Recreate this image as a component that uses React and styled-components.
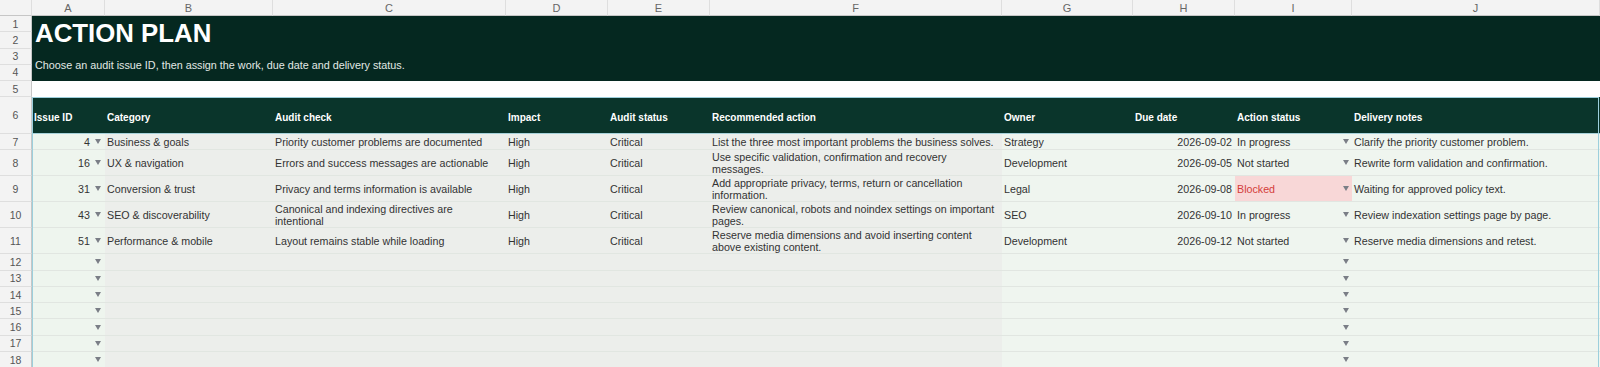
import React from "react"
import styled, { createGlobalStyle } from "styled-components"

const COLS = "32px 73px 168px 233px 102px 102px 292px 131px 102px 117px 248px"

const GlobalStyle = createGlobalStyle`
  html, body {
    margin: 0;
    padding: 0;
    background: #ffffff;
    overflow: hidden;
  }
  body {
    font-family: "Liberation Sans", Arial, sans-serif;
    font-size: 10.7px;
    color: #333;
  }
`

const Sheet = styled.div`
  width: 1600px;
  height: 367px;
  overflow: hidden;
`

const Row = styled.div`
  display: grid;
  grid-template-columns: ${COLS};
  height: ${(p) => p.$h}px;
`

const ColLetter = styled.div`
  background: #f3f3f3;
  border-right: 1px solid #dedede;
  border-bottom: 1px solid #c6c6c6;
  color: #666;
  font-size: 11px;
  display: flex;
  align-items: center;
  justify-content: center;
  box-sizing: border-box;
`

const RowNum = styled.div`
  background: #f3f3f3;
  border-right: 1px solid #c6c6c6;
  border-bottom: 1px solid #dedede;
  color: #555;
  font-size: 10.5px;
  display: flex;
  align-items: center;
  justify-content: center;
  box-sizing: border-box;
  height: ${(p) => (p.$h ? `${p.$h}px` : "auto")};
`

/* rows 1-4: merged banner */
const TitleBlock = styled.div`
  display: grid;
  grid-template-columns: 32px 1fr;
`

const Gutter = styled.div`
  display: flex;
  flex-direction: column;
`

const Banner = styled.div`
  background: #052820;
  display: grid;
  grid-template-rows: 1fr 1fr;
  padding-left: 3px;
`

const Title = styled.h1`
  margin: 0;
  padding-top: 3px;
  color: #ffffff;
  font-size: 25.8px;
  font-weight: 700;
  display: flex;
  align-items: center;
`

const Subtitle = styled.p`
  margin: 0;
  color: #e2e9e5;
  font-size: 10.8px;
  display: flex;
  align-items: center;
`

const Spacer = styled.div`
  grid-column: 2 / -1;
  background: #ffffff;
`

const Frame = styled.div`
  position: relative;

  &::after {
    content: "";
    position: absolute;
    left: 32px;
    top: 0;
    right: 1px;
    bottom: 0;
    border: 1px solid #9ccfdc;
    border-bottom: none;
    pointer-events: none;
  }
`

const tones = {
  head: "#0a352b",
  id: "#eef5ee",
  grey: "#eceeeb",
  green: "#eff5ef",
  blocked: "#f8d7d7",
}

const Cell = styled.div`
  background: ${(p) => tones[p.$tone]};
  color: ${(p) => (p.$tone === "head" ? "#ffffff" : p.$tone === "blocked" ? "#d43d3a" : "#333")};
  font-weight: ${(p) => (p.$tone === "head" ? 700 : 400)};
  font-size: ${(p) => (p.$tone === "head" ? "10px" : "10.7px")};
  border-bottom: 1px solid ${(p) => (p.$tone === "head" ? "#a7d2da" : "#e1e6e1")};
  box-sizing: border-box;
  padding: ${(p) => (p.$tone === "head" ? "5px 3px 0 2px" : "0 3px 0 2px")};
  display: flex;
  align-items: center;
  justify-content: ${(p) => (p.$right ? "flex-end" : "flex-start")};
  line-height: 12px;
  min-width: 0;
  overflow: hidden;
`

const IdCell = styled(Cell)`
  justify-content: flex-end;
  gap: 5px;
  padding-right: 4px;
`

const StatusCell = styled(Cell)`
  padding-right: 3px;
`

const Caret = styled.span`
  width: 0;
  height: 0;
  margin-left: ${(p) => (p.$push ? "auto" : "0")};
  border-left: 3px solid transparent;
  border-right: 3px solid transparent;
  border-top: 5px solid #7a7e86;
  flex: none;
`

const letters = ["A", "B", "C", "D", "E", "F", "G", "H", "I", "J"]

const headers = [
  "Issue ID",
  "Category",
  "Audit check",
  "Impact",
  "Audit status",
  "Recommended action",
  "Owner",
  "Due date",
  "Action status",
  "Delivery notes",
]

const items = [
  {
    id: 4,
    category: "Business & goals",
    check: "Priority customer problems are documented",
    action: "List the three most important problems the business solves.",
    owner: "Strategy",
    due: "2026-09-02",
    status: "In progress",
    notes: "Clarify the priority customer problem.",
    h: 16.3,
  },
  {
    id: 16,
    category: "UX & navigation",
    check: "Errors and success messages are actionable",
    action: "Use specific validation, confirmation and recovery messages.",
    owner: "Development",
    due: "2026-09-05",
    status: "Not started",
    notes: "Rewrite form validation and confirmation.",
    h: 26,
  },
  {
    id: 31,
    category: "Conversion & trust",
    check: "Privacy and terms information is available",
    action: "Add appropriate privacy, terms, return or cancellation information.",
    owner: "Legal",
    due: "2026-09-08",
    status: "Blocked",
    notes: "Waiting for approved policy text.",
    h: 26,
  },
  {
    id: 43,
    category: "SEO & discoverability",
    check: "Canonical and indexing directives are intentional",
    action: "Review canonical, robots and noindex settings on important pages.",
    owner: "SEO",
    due: "2026-09-10",
    status: "In progress",
    notes: "Review indexation settings page by page.",
    h: 26,
  },
  {
    id: 51,
    category: "Performance & mobile",
    check: "Layout remains stable while loading",
    action: "Reserve media dimensions and avoid inserting content above existing content.",
    owner: "Development",
    due: "2026-09-12",
    status: "Not started",
    notes: "Reserve media dimensions and retest.",
    h: 26,
  },
]

function DataRow({ n, item, h }) {
  const it = item || {}
  return (
    <Row $h={h}>
      <RowNum>{n}</RowNum>
      <IdCell $tone="id">
        {it.id}
        <Caret />
      </IdCell>
      <Cell $tone="grey">{it.category}</Cell>
      <Cell $tone="grey">{it.check}</Cell>
      <Cell $tone="grey">{item ? "High" : ""}</Cell>
      <Cell $tone="grey">{item ? "Critical" : ""}</Cell>
      <Cell $tone="grey">{it.action}</Cell>
      <Cell $tone="green">{it.owner}</Cell>
      <Cell $tone="green" $right>
        {it.due}
      </Cell>
      <StatusCell $tone={it.status === "Blocked" ? "blocked" : "green"}>
        {it.status}
        <Caret $push />
      </StatusCell>
      <Cell $tone="green">{it.notes}</Cell>
    </Row>
  )
}

export default function App() {
  const empty = [12, 13, 14, 15, 16, 17, 18]
  return (
    <Sheet>
      <GlobalStyle />
      <Row $h={16}>
        <ColLetter />
        {letters.map((l) => (
          <ColLetter key={l}>{l}</ColLetter>
        ))}
      </Row>

      <TitleBlock>
        <Gutter>
          {[1, 2, 3, 4].map((n) => (
            <RowNum key={n} $h={16.25}>
              {n}
            </RowNum>
          ))}
        </Gutter>
        <Banner>
          <Title>ACTION PLAN</Title>
          <Subtitle>Choose an audit issue ID, then assign the work, due date and delivery status.</Subtitle>
        </Banner>
      </TitleBlock>

      <Row $h={16}>
        <RowNum>5</RowNum>
        <Spacer />
      </Row>

      <Frame>
        <Row $h={37}>
          <RowNum>6</RowNum>
          {headers.map((t) => (
            <Cell key={t} $tone="head">
              {t}
            </Cell>
          ))}
        </Row>
        {items.map((it, i) => (
          <DataRow key={it.id} n={7 + i} item={it} h={it.h} />
        ))}
        {empty.map((n) => (
          <DataRow key={n} n={n} h={16.3} />
        ))}
      </Frame>
    </Sheet>
  )
}
